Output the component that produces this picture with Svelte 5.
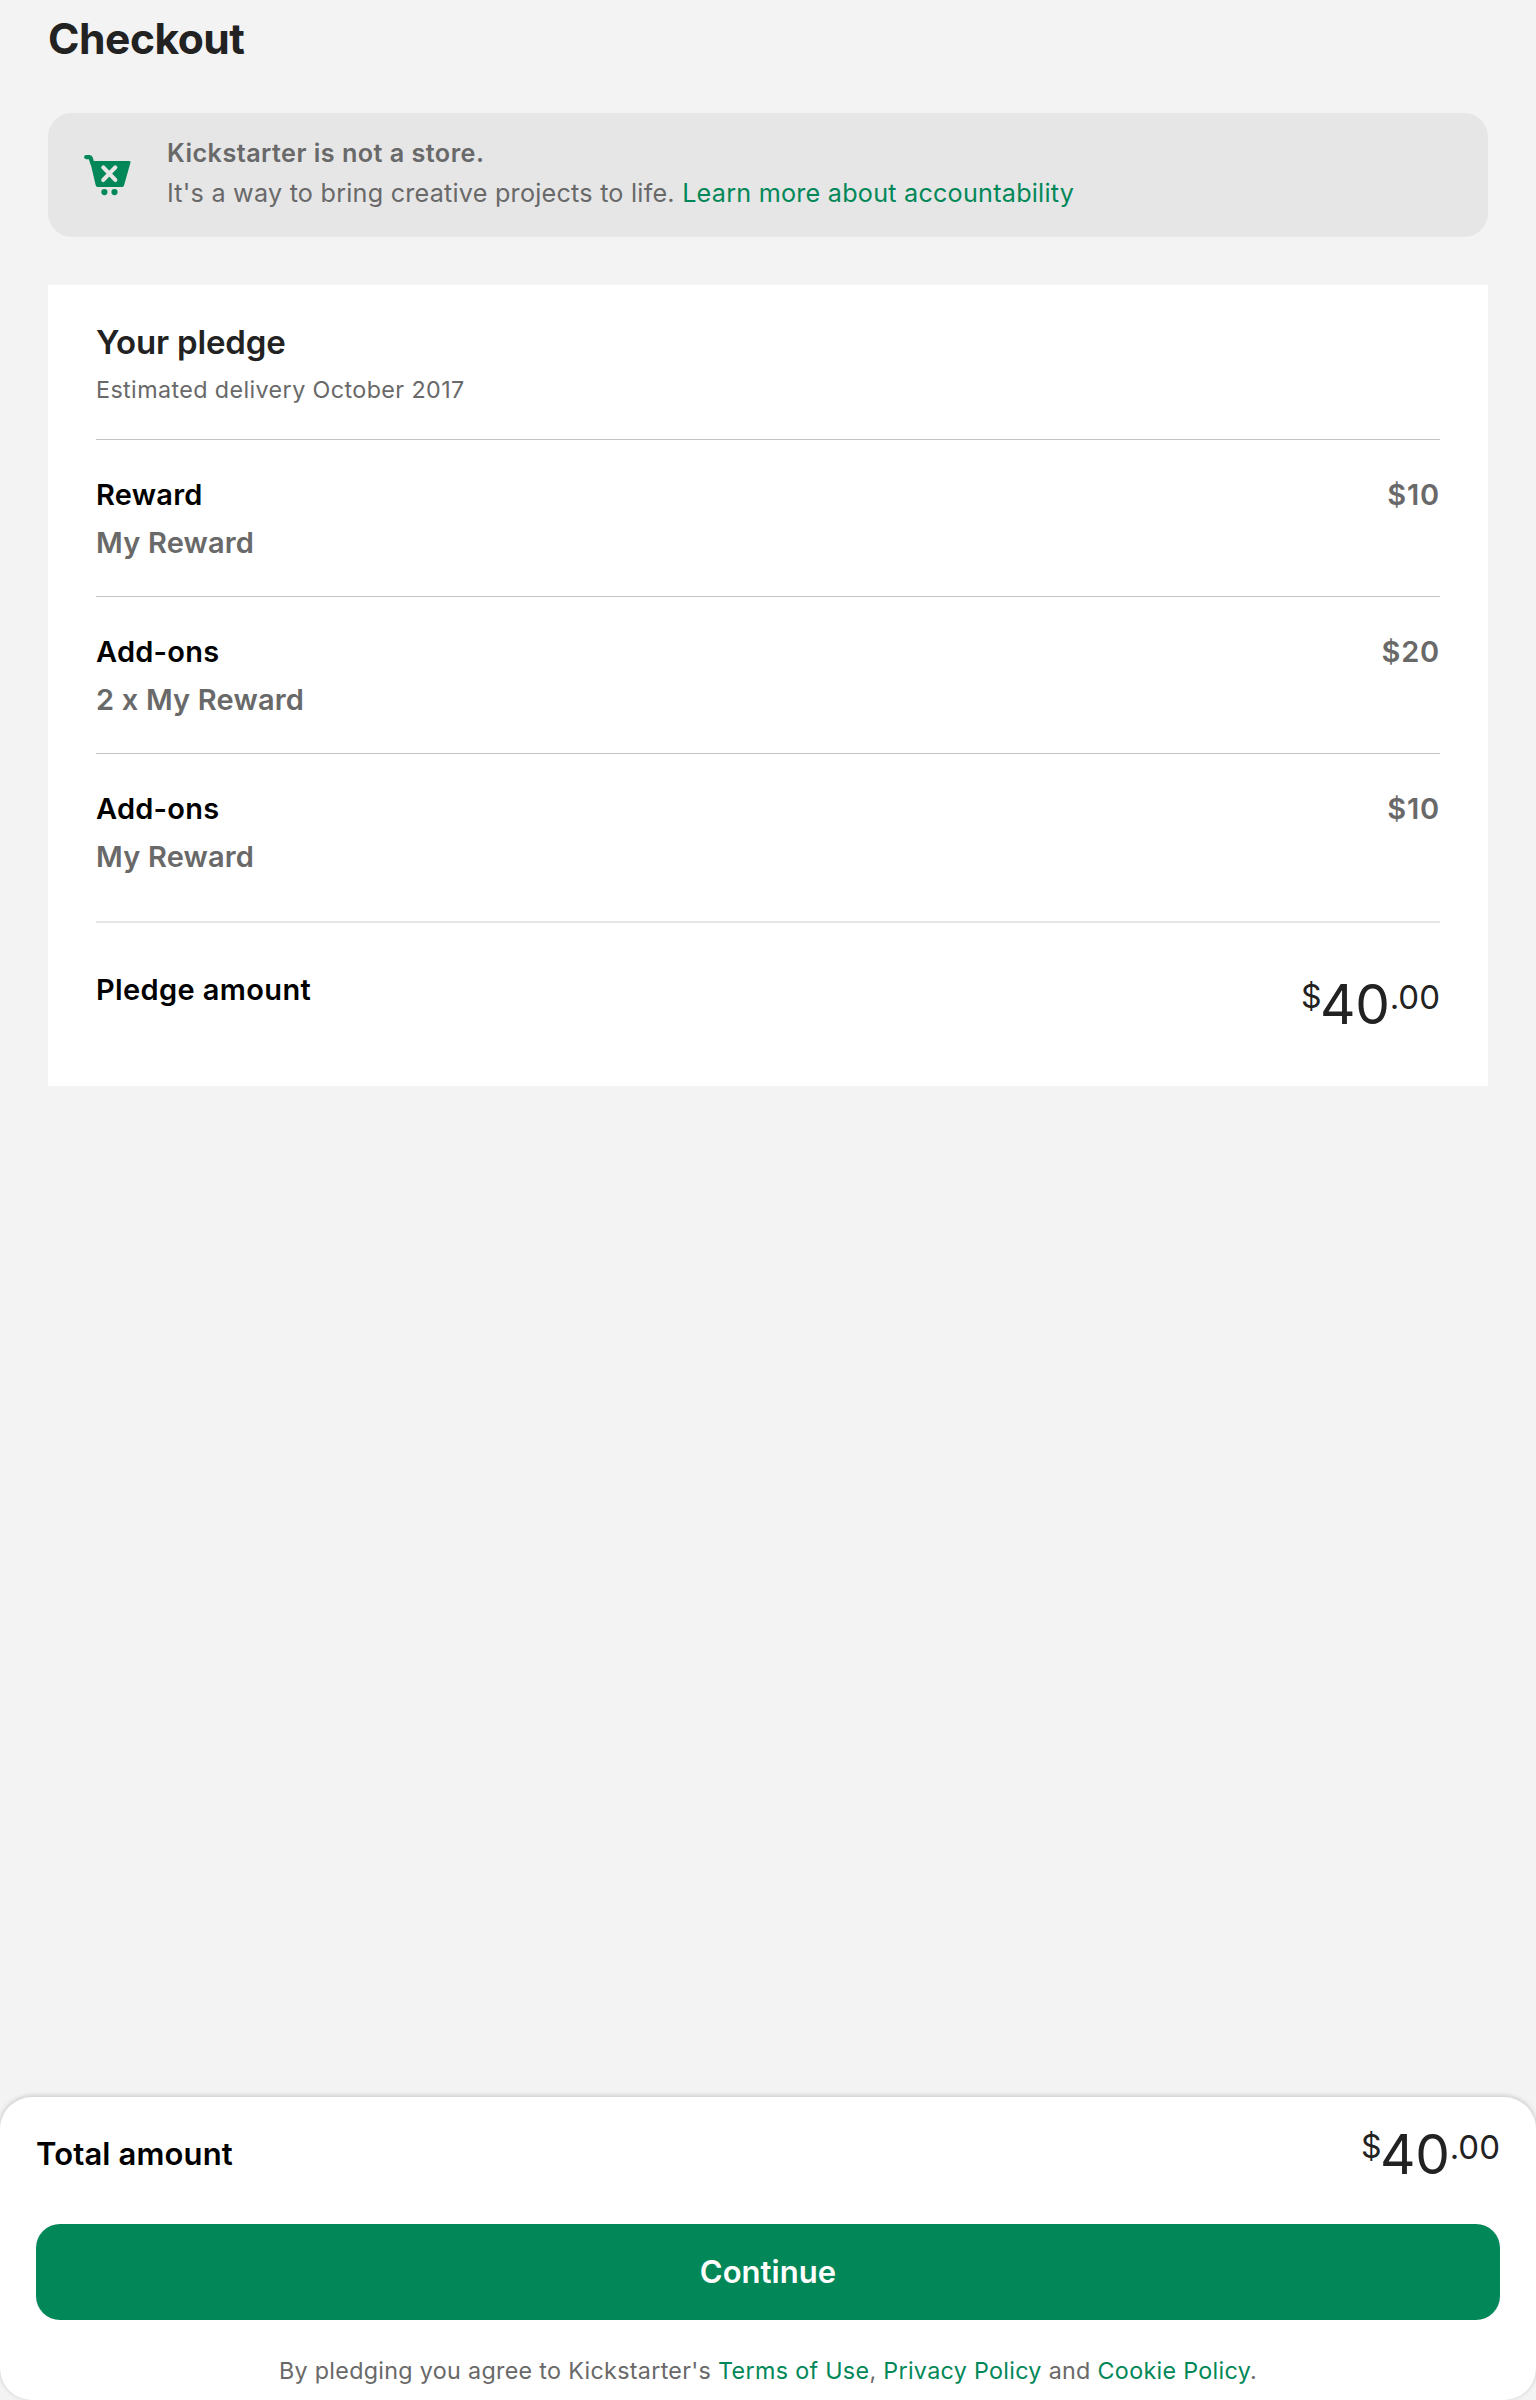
<script>
  const rows = [
    { label: 'Reward', item: 'My Reward', price: '$10' },
    { label: 'Add-ons', item: '2 x My Reward', price: '$20' },
    { label: 'Add-ons', item: 'My Reward', price: '$10' },
  ];
</script>

{#snippet money()}
  <div class="money"><span class="small symbol">$</span><span class="big">40</span><span class="small">.00</span></div>
{/snippet}

<div class="page">
  <main>
    <h1>Checkout</h1>

    <section class="notice">
      <svg class="cart" viewBox="0 0 48 42" aria-hidden="true">
        <path d="M2.2 3.1H5.6Q6.4 3.1 6.6 4L8.5 9.5" fill="none" stroke="#028858" stroke-width="4.2" stroke-linecap="round" />
        <path d="M6 7H45.3Q47 7 46.5 8.6L40 31.4Q39.4 33 38 33H13.6Q12.1 33 11.7 31.3Z" fill="#028858" />
        <path d="M19.3 13.4L31.3 25.9M31.3 13.4L19.3 25.9" stroke="#e6e6e6" stroke-width="4.2" stroke-linecap="round" />
        <circle cx="20.4" cy="38.1" r="3.1" fill="#028858" />
        <circle cx="30.5" cy="38.1" r="3.1" fill="#028858" />
      </svg>
      <div class="notice-text">
        <strong>Kickstarter is not a store.</strong>
        <p>It's a way to bring creative projects to life. <a href="#accountability">Learn more about accountability</a></p>
      </div>
    </section>

    <section class="card">
      <header>
        <h2>Your pledge</h2>
        <p>Estimated delivery October 2017</p>
      </header>
      <div class="rows">
        {#each rows as row}
          <div class="row">
            <div>
              <div class="label">{row.label}</div>
              <div class="item">{row.item}</div>
            </div>
            <div class="price">{row.price}</div>
          </div>
        {/each}
      </div>
      <div class="sum">
        <div class="label pledge">Pledge amount</div>
        {@render money()}
      </div>
    </section>
  </main>

  <footer>
    <div class="total">
      <span class="total-label">Total amount</span>
      {@render money()}
    </div>
    <button>Continue</button>
    <p class="terms">By pledging you agree to Kickstarter's <a href="#terms">Terms of Use</a>, <a href="#privacy">Privacy Policy</a> and <a href="#cookies">Cookie Policy</a>.</p>
  </footer>
</div>

<style>
  :global(body) { background: #f3f3f3; }
  .page {
    box-sizing: border-box;
    height: 2400px;
    display: flex;
    flex-direction: column;
    justify-content: space-between;
    font-family: Inter, "Liberation Sans", sans-serif;
    color: #222;
    background: #f3f3f3;
    overflow: hidden;
  }
  h1, h2, p { margin: 0; }
  a { color: #028858; text-decoration: none; }
  main { padding: 12px 48px 0; }
  h1 { font-size: 42.6px; line-height: 53px; font-weight: 700; letter-spacing: -0.5px; }

  .notice {
    box-sizing: border-box;
    height: 124px;
    margin-top: 48px;
    padding: 20px 36px;
    display: flex;
    background: #e6e6e6;
    border-radius: 24px;
    font-size: 25.2px;
    line-height: 40px;
    color: #696969;
  }
  .cart { width: 48px; height: 42px; margin: 21px 35px 0 0; flex: none; }
  .notice strong { display: block; font-weight: 600; letter-spacing: 0.46px; }
  .notice p { letter-spacing: 0.225px; }

  .card {
    box-sizing: border-box;
    height: 801px;
    margin-top: 48px;
    padding: 33px 48px 0;
    background: #fff;
  }
  header { height: 121px; border-bottom: 1px solid #c4c4c4; }
  h2 { font-size: 33px; line-height: 48px; font-weight: 600; letter-spacing: -0.18px; }
  header p { font-size: 23.3px; line-height: 48px; letter-spacing: 0.4px; color: #696969; }

  .rows { height: 481px; border-bottom: 2px solid #e5e5e5; }
  .row {
    display: flex;
    justify-content: space-between;
    padding: 31px 0 29px;
    border-bottom: 1px solid #c4c4c4;
    font-size: 29px;
    line-height: 48px;
    font-weight: 600;
  }
  .row:last-child { border-bottom: 0; }
  .label { color: #000; letter-spacing: 0.25px; }
  .item { color: #696969; letter-spacing: 0.18px; }
  .price { color: #696969; letter-spacing: 0.8px; }

  .sum { display: flex; justify-content: space-between; padding-top: 43px; font-size: 29px; line-height: 48px; font-weight: 600; }
  .pledge { letter-spacing: 0.37px; }
  .money { display: flex; align-items: flex-start; font-weight: 400; color: #222; }
  .sum .money { margin-top: 18px; }
  .small { font-size: 33px; line-height: 26px; }
  .symbol { font-size: 32px; letter-spacing: -1.6px; }
  .big { font-size: 55px; line-height: 40px; letter-spacing: -0.3px; }

  footer {
    box-sizing: border-box;
    height: 303px;
    padding: 37px 36px 0;
    background: #fff;
    border-radius: 32px;
    box-shadow: 0 -1px 5px rgba(0, 0, 0, 0.2);
  }
  .total { display: flex; justify-content: space-between; height: 90px; }
  .total-label { font-size: 31px; line-height: 40px; font-weight: 600; letter-spacing: 0.14px; color: #000; }
  button {
    display: block;
    width: 100%;
    height: 96px;
    padding: 0;
    border: 0;
    border-radius: 24px;
    background: #028858;
    color: #fff;
    font: 600 31px/96px Inter, "Liberation Sans", sans-serif;
    letter-spacing: 0.05px;
  }
  .terms { margin-top: 28px; text-align: center; font-size: 23.3px; line-height: 46px; letter-spacing: 0.31px; color: #696969; }
</style>
